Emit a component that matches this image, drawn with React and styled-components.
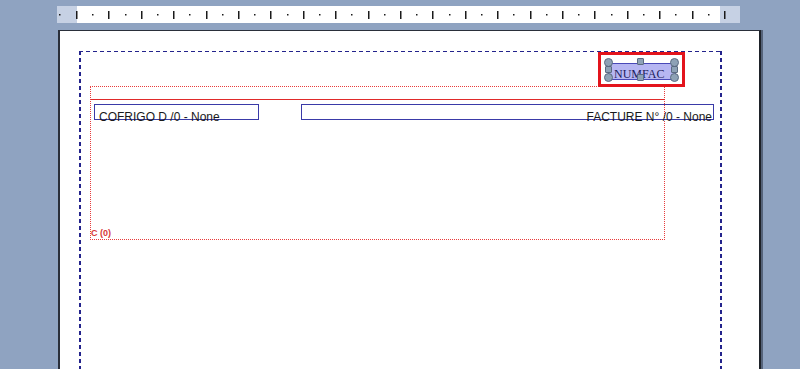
import styled, { createGlobalStyle } from "styled-components";

const Global = createGlobalStyle`
  html, body {
    margin: 0;
    padding: 0;
    background: #8fa3c1;
    overflow: hidden;
  }
  body {
    font-family: "Liberation Sans", Arial, sans-serif;
  }
`;

const Screen = styled.div`
  width: 800px;
  height: 369px;
  padding-top: 6px;
  box-sizing: border-box;
  overflow: hidden;
  display: flex;
  flex-direction: column;
`;

const Ruler = styled.div`
  position: relative;
  margin-left: 57px;
  width: 683px;
  height: 17px;
  display: flex;
  flex-shrink: 0;
`;

const RulerCap = styled.div`
  width: ${(p) => p.w}px;
  background: #c6d1e4;
`;

const RulerTrack = styled.div`
  flex: 1;
  background: #fff;
`;

const RulerScale = styled.svg`
  position: absolute;
  left: 0;
  top: 0;
`;

const Page = styled.div`
  margin-top: 7px;
  margin-left: 58px;
  width: 680px;
  flex: 1;
  background: #fff;
  border-left: 2px solid #2a2f3a;
  border-top: 1px solid #2a2f3a;
  border-right: 2px solid #1e2229;
  box-shadow: 2px 0 0 #55637a;
  padding: 20px 0 0 19px;
  box-sizing: content-box;
`;

const MarginBox = styled.div`
  position: relative;
  width: 643px;
  height: 420px;
  background:
    repeating-linear-gradient(to right, #23238c 0 4px, transparent 4px 7px) left top / 100% 1px no-repeat,
    repeating-linear-gradient(to bottom, #23238c 0 4px, transparent 4px 7px) left top / 2px 100% no-repeat,
    repeating-linear-gradient(to bottom, #23238c 0 4px, transparent 4px 7px) right top / 2px 100% no-repeat;
  padding-top: 35px;
  padding-left: 11px;
  box-sizing: border-box;
`;

const Band = styled.div`
  width: 575px;
  height: 154px;
  box-sizing: border-box;
  border: 1px dotted #e83c3c;
  display: flex;
  flex-direction: column;
`;

const BandRule = styled.div`
  margin-top: 12px;
  height: 1px;
  background: #e02a2a;
  margin-right: -1px;
`;

const FieldRow = styled.div`
  display: flex;
  gap: 42px;
  margin-top: 4px;
  padding-left: 3px;
`;

const Field = styled.div`
  flex-shrink: 0;
  width: ${(p) => p.w}px;
  height: 16px;
  box-sizing: border-box;
  border: 1px solid #3a3aa8;
  font-size: 12px;
  line-height: 12px;
  color: #1a1a1a;
  padding: 6px 1px 0 4px;
  text-align: ${(p) => p.align};
  white-space: nowrap;
`;

const BandLabel = styled.span`
  margin-top: auto;
  margin-bottom: 1px;
  font-size: 9px;
  font-weight: bold;
  line-height: 9px;
  color: #d63a3a;
`;

const Selected = styled.div`
  position: absolute;
  left: 519px;
  top: 1px;
  width: 87px;
  height: 35px;
  box-sizing: border-box;
  border: 3px solid #e3141c;
`;

const NumBox = styled.div`
  position: absolute;
  left: 7px;
  top: 8px;
  width: 68px;
  height: 17px;
  box-sizing: border-box;
  background: #b6b6f2;
  border: 1px solid #4848b8;
  font-family: "Liberation Serif", "Times New Roman", serif;
  font-size: 12px;
  line-height: 12px;
  color: #1c1c5c;
  padding: 4px 0 0 5px;
  white-space: nowrap;
`;

const Handle = styled.div`
  position: absolute;
  left: ${(p) => p.x}px;
  top: ${(p) => p.y}px;
  width: ${(p) => p.s}px;
  height: ${(p) => p.s}px;
  box-sizing: border-box;
  background: #8ea2b6;
  border: 1px solid #5b6b82;
  border-radius: ${(p) => (p.round ? "50%" : "1px")};
`;

const handles = [
  { x: 3, y: 3, s: 9, round: true },
  { x: 4, y: 11, s: 7 },
  { x: 3, y: 18, s: 9, round: true },
  { x: 69, y: 3, s: 9, round: true },
  { x: 70, y: 11, s: 7 },
  { x: 69, y: 18, s: 9, round: true },
  { x: 36, y: 3, s: 7 },
  { x: 36, y: 19, s: 7 },
];

function RulerTicks() {
  const marks = [];
  for (let i = 0; i < 42; i++) {
    const x = Math.round(19 + i * 16.2);
    if (x > 680) break;
    if (i % 2 === 0) {
      marks.push(<rect key={i} x={x} y={5} width={1.5} height={8} fill="#1a1a1a" />);
    } else {
      marks.push(<rect key={i} x={x} y={8} width={1.5} height={1.5} fill="#1a1a1a" />);
    }
  }
  return (
    <RulerScale width="683" height="17">
      <rect x={2} y={8} width={1.5} height={1.5} fill="#1a1a1a" />
      {marks}
    </RulerScale>
  );
}

export default function App() {
  return (
    <>
      <Global />
      <Screen>
        <Ruler>
          <RulerCap w={20} />
          <RulerTrack />
          <RulerCap w={20} />
          <RulerTicks />
        </Ruler>
        <Page>
          <MarginBox>
            <Band>
              <BandRule />
              <FieldRow>
                <Field w={165} align="left">COFRIGO D /0 - None</Field>
                <Field w={413} align="right">FACTURE N° /0 - None</Field>
              </FieldRow>
              <BandLabel>C (0)</BandLabel>
            </Band>
            <Selected>
              <NumBox>NUMFAC</NumBox>
              {handles.map((h, i) => (
                <Handle key={i} {...h} />
              ))}
            </Selected>
          </MarginBox>
        </Page>
      </Screen>
    </>
  );
}
